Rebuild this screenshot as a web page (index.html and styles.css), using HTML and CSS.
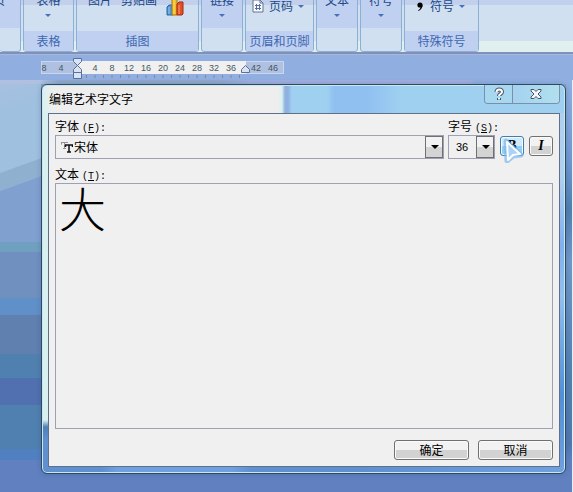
FILE: index.html
```
<!DOCTYPE html>
<html lang="zh-CN">
<head>
<meta charset="utf-8">
<title>编辑艺术字文字</title>
<link rel="stylesheet" href="styles.css">
</head>
<body>
<header class="ribbon">
  <section class="group g-page plain"><button class="tool">页</button></section>
  <section class="group g-table"><div class="tools"><button class="tool">表格<i class="caret"></i></button></div><h2>表格</h2></section>
  <section class="group g-art"><div class="tools"><button class="tool">图片</button><button class="tool">剪贴画</button>
    <svg class="chart" width="18" height="22" viewBox="0 0 18 22"><path d="M1 13l2-2h4v10H1z" fill="#4c94dc" stroke="#2868a8"/><path d="M6 3l2-2h3v20H6z" fill="#f0bd20" stroke="#a87808"/><path d="M11 10l2-2h4v12l-1 1h-5z" fill="#e65020" stroke="#a82810"/><path d="M3 13v7M8 4v16M13 11v9" stroke="#fff" opacity=".45"/></svg></div><h2>插图</h2></section>
  <section class="group g-link plain"><button class="tool">链接<i class="caret"></i></button></section>
  <section class="group g-header"><div class="tools row"><svg width="12" height="14" viewBox="0 0 12 14"><path d="M1 1h7l3 3v9H1z" fill="#f8faff" stroke="#66758c"/><path d="M8 1v3h3M4.500 5v6M7.500 5v6M3 6.500h6M3 9.500h6" fill="none" stroke="#5570a0"/></svg><button>页码<i class="caret"></i></button></div><h2>页眉和页脚</h2></section>
  <section class="group g-small plain"><button class="tool">文本<i class="caret"></i></button></section>
  <section class="group g-small plain"><button class="tool">符号<i class="caret"></i></button></section>
  <section class="group g-symbol"><div class="tools row"><svg width="10" height="14" viewBox="0 0 10 14"><circle cx="5" cy="6" r="2.600"/><path d="M7.600 6c0 3-2 5-4 6l-.5-.7C5 10.500 5.500 9 5.500 8z"/></svg><button>符号<i class="caret"></i></button></div><h2>特殊符号</h2></section>
</header>
<div class="ruler">
  <svg width="244" height="22" viewBox="0 0 244 22">
    <rect y="3" width="243" height="13" fill="#c8d6ee"/><rect x="1" y="4" width="241" height="11" fill="#b0c0e0"/><rect x="37" y="3" width="168" height="13" fill="#f0f0f0"/>
    <path d="M45 18.500h155" stroke="#7f8794" stroke-width="3" stroke-dasharray="1 7.500"/>
    <g class="nums"><text x="3" y="13">8</text><text x="20" y="13">4</text><text x="54" y="13">4</text><text x="71" y="13">8</text><text x="88" y="13">12</text><text x="105" y="13">16</text><text x="122" y="13">20</text><text x="139" y="13">24</text><text x="156" y="13">28</text><text x="173" y="13">32</text><text x="190" y="13">36</text><text x="215" y="13">42</text><text x="232" y="13">46</text></g>
    <g fill="#d8e4f6" stroke="#5c7094"><path d="M32.500 .5h8v3l-4 4-4-4zM36.500 7.500l4 4v3h-8v-3zM32.500 14.500h8v6h-8zM200.500 14.500v-3l4-4 4 4v3z"/></g>
  </svg>
</div>
<main class="desktop">
  <form class="dialog">
    <div class="titlebar"><h1>编辑艺术字文字</h1>
      <div class="winbtns"><button type="button" aria-label="帮助"><svg width="12" height="14" viewBox="0 0 12 14"><path d="M3.500 5c0-3.500 5.500-3.500 5.500 0 0 2-3 2-3 4M6 11v2" fill="none" stroke="#4a5468" stroke-width="4"/><path d="M3.500 5c0-3.500 5.500-3.500 5.500 0 0 2-3 2-3 4M6 11v1.500" fill="none" stroke="#fff" stroke-width="2"/></svg></button><button type="button" aria-label="关闭"><svg width="14" height="12" viewBox="0 0 14 12"><path d="M2 1.500h3l2 2 2-2h3v1.500l-3 3 3 3v1.500h-3l-2-2-2 2h-3V9l3-3-3-3z" fill="#f4f6fa" stroke="#4a5468"/></svg></button></div>
    </div>
    <div class="client">
      <div class="fields">
        <div class="field font"><label for="font">字体<span>(<u>F</u>):</span></label><div class="combo"><svg class="tt" width="12" height="12" viewBox="0 0 12 12"><path d="M0 1.500h7M3.500 1v7M2 7.500h3M.5 1v2.500" fill="none" stroke="#988f98"/><path d="M4 4h8M8 4v7M6 11h4M4.500 4v2M11.500 4v2" fill="none" stroke="#111" stroke-width="1.500"/></svg><select id="font"><option>宋体</option></select></div></div>
        <div class="field size"><label for="size">字号<span>(<u>S</u>):</span></label><div class="combo"><select id="size"><option>36</option></select></div></div>
        <button type="button" class="style bold">B<svg class="pointer" width="22" height="25" viewBox="0 0 22 25"><path d="M4 3l15 14-8 1-6 5z" fill="none" stroke="#7cb8ee" stroke-width="5" stroke-linejoin="round" opacity=".7"/><path d="M5 4l13 12-7 1-5 5z" fill="#a9d3f7" stroke="#fff" stroke-width="2" stroke-linejoin="round"/></svg></button>
        <button type="button" class="style italic">I</button>
      </div>
      <label class="textlabel" for="text">文本<span>(<u>T</u>):</span></label>
      <textarea id="text" spellcheck="false">大</textarea>
      <div class="actions"><button type="button">确定</button><button type="button">取消</button></div>
    </div>
  </form>
</main>
</body>
</html>
```
FILE: styles.css
```
* { box-sizing: border-box; }
body {
  margin: 0;
  min-height: 100vh;
  display: flex;
  flex-direction: column;
  font: 12px/16px "Noto Sans CJK SC", sans-serif;
  color: #000;
  background: #6080c0;
}
button, select, textarea { font: inherit; color: inherit; margin: 0; padding: 0; }
h1, h2 { margin: 0; font-size: 12px; font-weight: 400; }

.ribbon {
  height: 54px;
  flex: none;
  display: flex;
  align-items: flex-end;
  gap: 2px;
  overflow: hidden;
  padding-bottom: 2px;
  background: linear-gradient(#c2d0f0 5px, #d0e0f0 5px 41px, #dff0ef 41px 52px, #8090b8 52px);
}
.group {
  flex: none;
  height: 66px;
  display: flex;
  flex-direction: column;
  border: 1px solid #8cb0d4;
  border-radius: 3px;
  background: linear-gradient(#c2d0ec 18px, #d0e0f0 18px);
  color: #204888;
}
.group h2 { height: 20px; line-height: 19px; text-align: center; color: #3c68b0; background: #c0d0f0; }
.group button { border: 0; background: none; white-space: nowrap; }
.plain { background: linear-gradient(#c0d0f0 41px, #d0e0f0 41px); }
.tools { flex: 1; display: flex; justify-content: center; }
.tool { display: flex; flex-direction: column; align-items: center; align-self: center; gap: 6px; height: 44px; }
.group .tool { padding-top: 5px; }
.tools .tool { align-self: flex-start; }
.g-page { width: 21px; border-left: 0; }
.g-page .tool { align-self: flex-start; margin-left: -7px; }
.g-table { width: 51px; }
.g-art { width: 123px; }
.g-art .tools { gap: 9px; padding-right: 3px; }
.g-link { width: 42px; }
.g-header { width: 69px; }
.g-small { width: 42px; }
.g-symbol { width: 75px; }
.row { align-items: center; gap: 5px; padding: 0 3px 6px 0; }
.row button { display: flex; align-items: center; gap: 5px; }
.chart { margin-top: 7px; }
.caret { width: 0; height: 0; border: 3px solid transparent; border-top-color: #4870b8; border-bottom: 0; }

.ruler { flex: none; height: 26px; padding: 3px 0 0 41px; background: #90aee0; border-top: 1px solid #a8b8d8; }
.ruler svg { display: block; }
.nums { font: 9px "Liberation Sans", sans-serif; fill: #465660; text-anchor: middle; }

.desktop {
  flex: 1;
  display: flex;
  padding: 4px 6px 18px 41px;
  border-right: 1px solid #e8ecf4;
  background:
    linear-gradient(90deg, #b0c0e0 40px, #90a8cc 60px 220px, #a0b0e0 250px 470px, #90b0e0 475px) 0 0 / 100% 4px no-repeat,
    linear-gradient(160deg, #a8c0e0, #a0c0e0 30px 87px, #90b0d0 88px 104px, #80a0d0 105px) 0 0 / 41px 115px no-repeat,
    linear-gradient(#90b0e0, #7098d0 80px, #5080b0 130px, #7098c8 180px, #5080b0 300px, #5078b0 365px, #6080c0 380px) 100% 0 / 6px 100% no-repeat,
    linear-gradient(#80a0d0 162px, #70a0c0 162px 172px, #7090c0 172px 218px, #6090c8 218px 235px, #6080b0 235px 274px, #5080b0 274px 298px, #5070b0 298px 325px, #5080b0 325px 369px, #5080c0 369px 380px, #6080c0 380px);
}
.dialog {
  flex: 1;
  display: flex;
  flex-direction: column;
  border: 1px solid #304860;
  border-radius: 6px;
  padding: 0 5px 6px 6px;
  box-shadow: inset 0 0 0 1px #c8e8f0, 0 0 5px rgba(40, 70, 120, .3);
  background:
    linear-gradient(90deg, #d8f0f0, #eee 12px 236px, #d8f0f0 240px, #90b0e0 243px 246px, #a0d0f0 250px 285px, #90c0f0 292px 325px, #a0d0f0 360px) 0 0 / 100% 28px no-repeat,
    linear-gradient(90deg, #6090d0 60px, #70a0e0 75px 190px, #6090d0 210px 320px, #70a0e0) 0 100% / 100% 6px no-repeat,
    linear-gradient(#d8f0f0 335px, #5080b8 342px, #6090d0 355px) 0 0 / 6px 100% no-repeat,
    linear-gradient(#b0d0f0 90px, #80b0f0 160px, #90c0f0 210px, #5090d8 310px, #70a0e0);
}
.titlebar { height: 28px; display: flex; justify-content: space-between; padding-left: 1px; }
.titlebar h1 { line-height: 27px; }
.winbtns { display: flex; height: 19px; border: 1px solid #7890a8; border-top: 0; border-radius: 0 0 4px 4px; overflow: hidden; }
.winbtns button { display: flex; align-items: center; justify-content: center; width: 27px; border: 0; background: #a8d8f0; }
.winbtns button + button { width: 47px; border-left: 1px solid #7890a8; background: linear-gradient(90deg, #a4d2f0, #b0e0ee); }
.client { flex: 1; display: flex; flex-direction: column; padding: 4px 6px 6px; border: 1px solid #607088; background: #f0f0f0; }
.fields { display: flex; align-items: flex-end; gap: 4px; }
.font { flex: 1; }
label { display: block; height: 17px; white-space: nowrap; }
label span { margin-left: 3px; font: 10px "Liberation Mono", monospace; }
.combo { position: relative; height: 24px; border: 1px solid #a0a0b4; }
.combo::after {
  content: "";
  position: absolute;
  inset: 0 0 0 auto;
  width: 16px;
  border: 1px solid #707070;
  background: linear-gradient(#f2f2f2 50%, #d4d4d4 50%);
  pointer-events: none;
}
.combo::before {
  content: "";
  position: absolute;
  z-index: 1;
  right: 4px;
  top: 9px;
  border: 4px solid transparent;
  border-top-color: #000;
  border-bottom: 0;
  pointer-events: none;
}
.size { width: 47px; }
select { display: block; width: 100%; height: 22px; border: 0; appearance: none; background: none; padding-left: 18px; }
.size select { padding-left: 7px; font: 11px "Liberation Sans", sans-serif; }
.tt { position: absolute; left: 5px; top: 5px; }
.style, .actions button {
  height: 20px;
  border: 1px solid #707070;
  border-radius: 3px;
  background: linear-gradient(#f2f2f2 50%, #d2d2d2 50%);
  box-shadow: inset 0 0 0 1px #fafafa;
}
.actions button { line-height: 18px; }
.style { position: relative; width: 24px; margin: 0 0 3px 1px; font: bold 14px/16px "Liberation Serif", serif; }
.style.bold { border-color: #3c7fb1; background: linear-gradient(#d0eafa 50%, #98ccf0 50%); }
.style.italic { font-style: italic; }
.pointer { position: absolute; left: 1px; top: 1px; }
.textlabel { margin-top: 7px; }
textarea {
  flex: 1;
  display: block;
  width: 100%;
  border: 1px solid #a0a0b4;
  background: none;
  resize: none;
  padding: 0 3px;
  font-size: 47px;
  line-height: 46px;
  font-weight: 300;
}
.actions { display: flex; justify-content: flex-end; gap: 9px; margin-top: 11px; }
.actions button { width: 75px; }
```
